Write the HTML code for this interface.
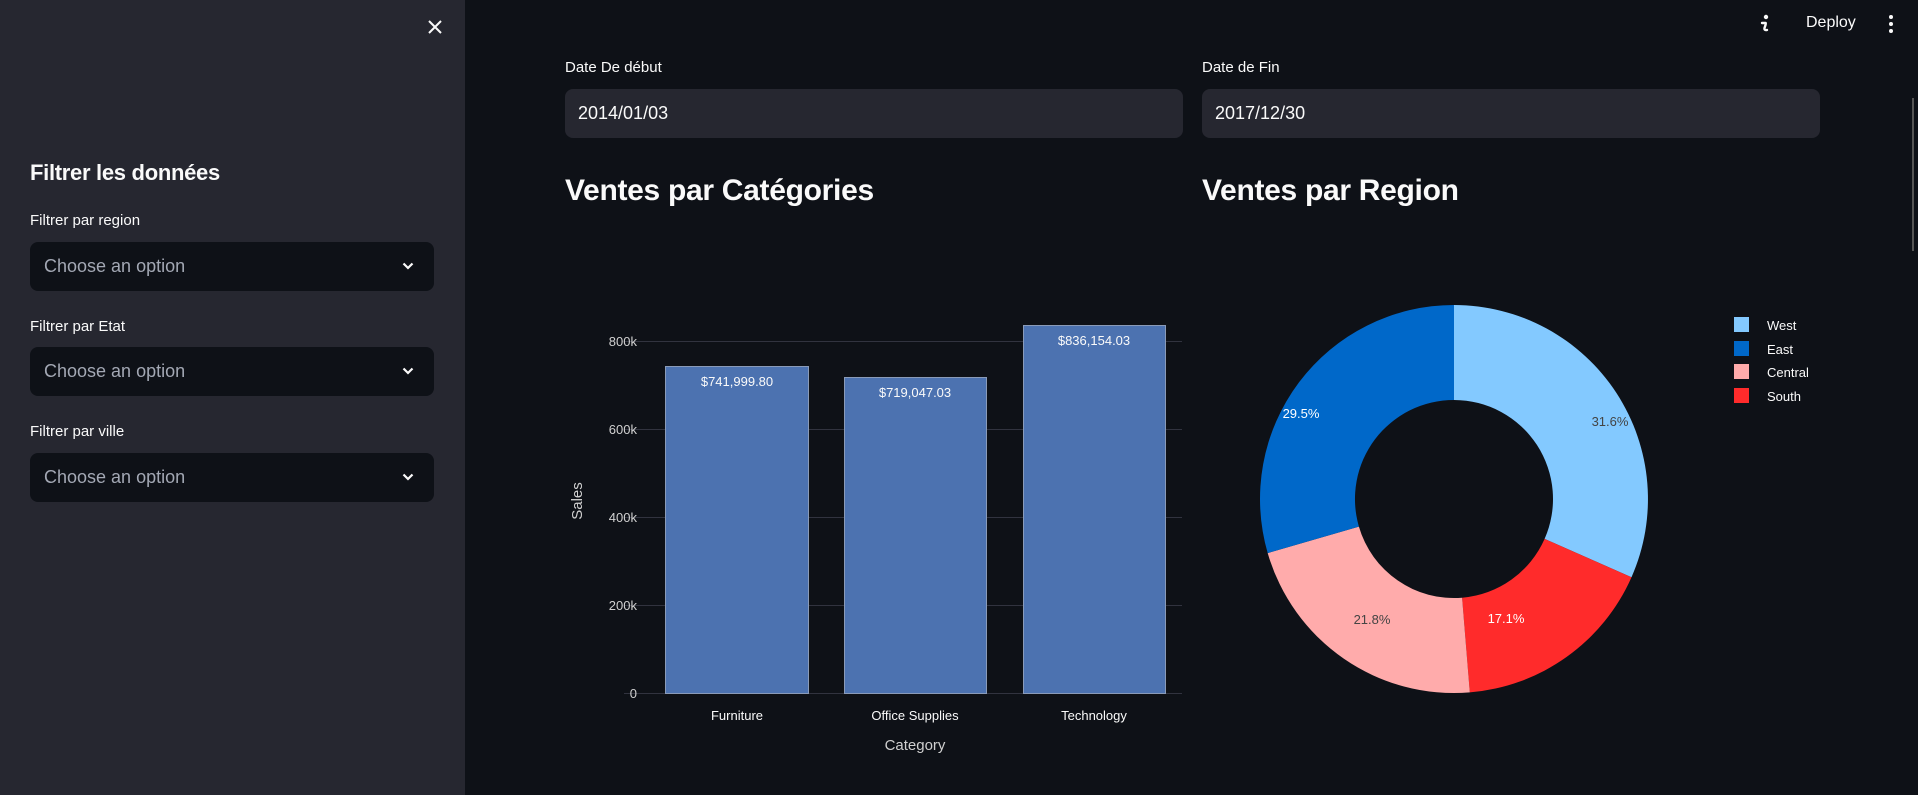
<!DOCTYPE html>
<html><head><meta charset="utf-8"><style>
*{margin:0;padding:0;box-sizing:border-box}
body{width:1918px;height:795px;background:#0e1117;font-family:"Liberation Sans",sans-serif;color:#fafafa;position:relative;overflow:hidden}
.a{position:absolute;white-space:nowrap}
#sb{position:absolute;left:0;top:0;width:465px;height:795px;background:#262730}
.lbl{font-size:15px;color:#fafafa}
.sel{position:absolute;left:30px;width:404px;height:49px;background:#0e1117;border-radius:8px;font-size:18px;color:#a3a8b4;padding:14px 0 0 14px}
.sel svg{position:absolute;right:20px;top:20px}
.inp{position:absolute;top:89px;height:49px;background:#262730;border-radius:8px;font-size:18px;color:#fafafa;padding:14px 0 0 13px}
h2{position:absolute;font-size:30px;font-weight:bold;top:174px;letter-spacing:-0.3px}
</style></head><body>
<div id="sb">
<svg class="a" style="left:427px;top:19px" width="16" height="16" viewBox="0 0 16 16"><path d="M2 2L14 14M14 2L2 14" stroke="#fafafa" stroke-width="2"/></svg>
<div class="a" style="left:30px;top:160px;font-size:22px;font-weight:bold;letter-spacing:-0.3px">Filtrer les données</div>
<div class="a lbl" style="left:30px;top:212px">Filtrer par region</div>
<div class="sel" style="top:242px">Choose an option<svg width="12" height="8" viewBox="0 0 12 8"><path d="M1.5 1.5L6 6L10.5 1.5" stroke="#fafafa" stroke-width="2.2" fill="none"/></svg></div>
<div class="a lbl" style="left:30px;top:318px">Filtrer par Etat</div>
<div class="sel" style="top:347px">Choose an option<svg width="12" height="8" viewBox="0 0 12 8"><path d="M1.5 1.5L6 6L10.5 1.5" stroke="#fafafa" stroke-width="2.2" fill="none"/></svg></div>
<div class="a lbl" style="left:30px;top:423px">Filtrer par ville</div>
<div class="sel" style="top:453px">Choose an option<svg width="12" height="8" viewBox="0 0 12 8"><path d="M1.5 1.5L6 6L10.5 1.5" stroke="#fafafa" stroke-width="2.2" fill="none"/></svg></div>
</div>
<svg class="a" style="left:1757px;top:14px" width="16" height="20" viewBox="0 0 16 20"><circle cx="9" cy="3" r="2.2" fill="#fafafa"/><path d="M5 9H8.5Q9 9 8.5 11L7.5 14Q7 16.5 10 16" stroke="#fafafa" stroke-width="2.4" fill="none" stroke-linecap="round"/></svg>
<div class="a" style="left:1806px;top:14px;font-size:16px">Deploy</div>
<svg class="a" style="left:1887px;top:14px" width="8" height="20"><circle cx="4" cy="3" r="2" fill="#fafafa"/><circle cx="4" cy="10" r="2" fill="#fafafa"/><circle cx="4" cy="17" r="2" fill="#fafafa"/></svg>
<div class="a" style="left:1912px;top:98px;width:2px;height:153px;background:#555"></div>
<div class="a lbl" style="left:565px;top:59px">Date De début</div>
<div class="inp" style="left:565px;width:618px">2014/01/03</div>
<div class="a lbl" style="left:1202px;top:59px">Date de Fin</div>
<div class="inp" style="left:1202px;width:618px">2017/12/30</div>
<h2 style="left:565px">Ventes par Catégories</h2>
<h2 style="left:1202px">Ventes par Region</h2>
<svg class="a" style="left:0;top:0" width="1918" height="795" font-family="Liberation Sans,sans-serif">
<g stroke="#31333f" stroke-width="1">
<line x1="624" y1="341.5" x2="1182" y2="341.5"/><line x1="624" y1="429.5" x2="1182" y2="429.5"/><line x1="624" y1="517.5" x2="1182" y2="517.5"/><line x1="624" y1="605.5" x2="1182" y2="605.5"/><line x1="624" y1="693.5" x2="1182" y2="693.5"/>
</g>
<g fill="#4c72b0" stroke="#8a9bb8" stroke-width="1">
<rect x="665.5" y="366.5" width="143" height="327"/>
<rect x="844.5" y="377.5" width="142" height="316"/>
<rect x="1023.5" y="325.5" width="142" height="368"/>
</g>
<g fill="#fafafa" font-size="13" text-anchor="middle">
<text x="737" y="386">$741,999.80</text><text x="915" y="397">$719,047.03</text><text x="1094" y="345">$836,154.03</text>
<text x="737" y="720">Furniture</text><text x="915" y="720">Office Supplies</text><text x="1094" y="720">Technology</text>
</g>
<g fill="#d0d0d0" font-size="13" text-anchor="end">
<text x="637" y="346">800k</text><text x="637" y="434">600k</text><text x="637" y="522">400k</text><text x="637" y="610">200k</text><text x="637" y="698">0</text>
</g>
<text x="915" y="750" fill="#d0d0d0" font-size="15" text-anchor="middle">Category</text>
<text transform="translate(582,501) rotate(-90)" fill="#d0d0d0" font-size="15" text-anchor="middle">Sales</text>
<path d="M1454,305 A194,194 0 0 1 1631.5,577.2 L1544.6,538.9 A99,99 0 0 0 1454,400 Z" fill="#83c9ff"/>
<path d="M1631.5,577.2 A194,194 0 0 1 1469.8,692.4 L1462.1,597.7 A99,99 0 0 0 1544.6,538.9 Z" fill="#ff2b2b"/>
<path d="M1469.8,692.4 A194,194 0 0 1 1267.7,553.1 L1358.9,526.6 A99,99 0 0 0 1462.1,597.7 Z" fill="#ffabab"/>
<path d="M1267.7,553.1 A194,194 0 0 1 1454,305 L1454,400 A99,99 0 0 0 1358.9,526.6 Z" fill="#0068c9"/>
<g font-size="13" text-anchor="middle">
<text x="1610" y="426" fill="#444">31.6%</text><text x="1301" y="418" fill="#fff">29.5%</text><text x="1372" y="624" fill="#444">21.8%</text><text x="1506" y="623" fill="#fff">17.1%</text>
</g>
<rect x="1734" y="317" width="15" height="15" fill="#83c9ff"/><rect x="1734" y="341" width="15" height="15" fill="#0068c9"/><rect x="1734" y="364" width="15" height="15" fill="#ffabab"/><rect x="1734" y="388" width="15" height="15" fill="#ff2b2b"/>
<g fill="#fafafa" font-size="13"><text x="1767" y="330">West</text><text x="1767" y="354">East</text><text x="1767" y="377">Central</text><text x="1767" y="401">South</text></g>
</svg>
</body></html>
